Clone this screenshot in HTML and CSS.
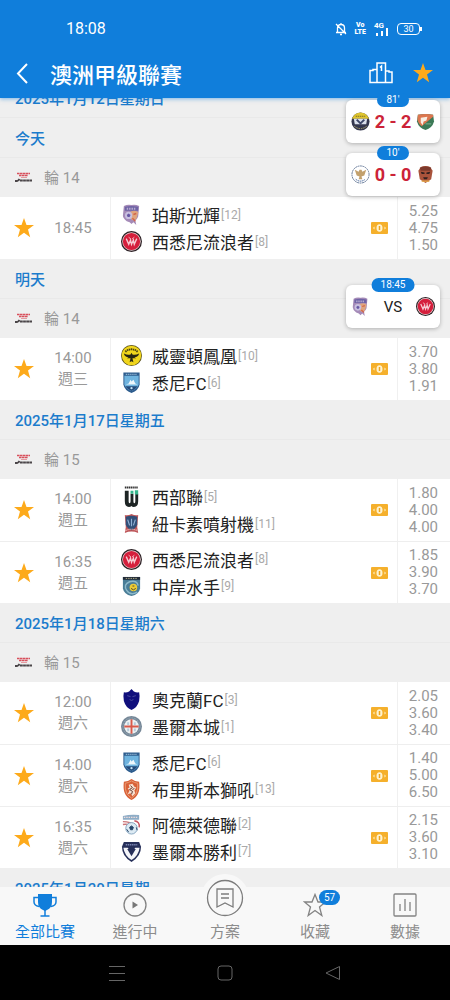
FILE: index.html
```html
<!DOCTYPE html>
<html lang="zh-Hant">
<head>
<meta charset="utf-8">
<meta name="viewport" content="width=device-width, initial-scale=1">
<title>澳洲甲級聯賽</title>
<link rel="stylesheet" href="styles.css">
</head>
<body>
<svg class="sprite" aria-hidden="true">
  <symbol id="star" viewBox="0 0 20 20"><path d="M10 0l2.500 7H20l-6 4.600 2.200 7.600L10 14.800l-6.200 4.400L6 11.600 0 7h7.500z"/></symbol>
  <symbol id="cash" viewBox="0 0 17 12"><rect width="17" height="12" rx="1" fill="#f5b02c"/><ellipse cx="8.500" cy="6" rx="3" ry="3.800" fill="#fff3d0"/><path d="M8.500 4v4" stroke="#eda51f" stroke-width="1.500"/><path d="M3.500 4.500L2 6l1.500 1.500zM13.500 4.500L15 6l-1.500 1.500z" fill="#fff3d0"/></symbol>
  <symbol id="league" viewBox="0 0 18 10"><path d="M2 1.500h13M4 3.500h9" stroke="#d8505c" stroke-width="1.500" stroke-dasharray="2.500 .4"/><path d="M6 5.500h6" stroke="#e39aa0" stroke-width="1"/><path d="M0 9h3l1.500-2M5 8.500h12" stroke="#4b4649" stroke-width="2" stroke-dasharray="2.800 .3" fill="none"/></symbol>
  <symbol id="perth" viewBox="0 0 22 22"><path d="M3 2q4-2 8-1 4-1 8 1l-1 11q-1 3-3 4l1 5-3-3-2 2-2-2-3-1q-4-3-4-6z" fill="#a58bb8"/><path d="M4 3q7-2 14 0v4H4z" fill="#6f63a5"/><path d="M6 5h10" stroke="#b9aed0" stroke-width="2" stroke-dasharray="1.500 1"/><path d="M10 8q6-2 8 1l-2 7-4 1-3-3z" fill="#e0a57c"/><circle cx="8" cy="12" r="3.800" fill="#c9c0e0"/><path d="M8 10l2 1.500-1 2H7l-1-2z" fill="#6656a3"/><path d="M13 11l3-1M12 15l3 3" stroke="#d2664c" stroke-width="1.500"/></symbol>
  <symbol id="wsw" viewBox="0 0 22 22"><circle cx="11" cy="11" r="11" fill="#2b2024"/><circle cx="11" cy="11" r="9.700" fill="#e8d3d6"/><circle cx="11" cy="11" r="9" fill="#d51f3c"/><path d="M5.500 8l2.600 6L10 9.500l1 4.500 2-4.500.9 4.500 2.600-6" fill="none" stroke="#f6ccd3" stroke-width="1.400"/><path d="M8 6.500l2.500 2M14 6.500l-2.500 2" stroke="#f4b9c2" stroke-width="1"/></symbol>
  <symbol id="phoenix" viewBox="0 0 22 22"><circle cx="11" cy="11" r="11" fill="#574f16"/><circle cx="11" cy="11" r="10.200" fill="#f0d51c"/><path d="M4.500 7q6.500-5 13 0" stroke="#4a4312" stroke-width="2" stroke-dasharray="1.500 .6" fill="none"/><path d="M3 9q4 2 7 1l1-2 1 2q3 1 7-1-1 4-5 4l2 1-4 0 1 4-2-1-2 1 1-4H6l2-1q-4 0-5-4z" fill="#282613"/></symbol>
  <symbol id="sydney" viewBox="0 0 22 22"><path d="M2.500 .5h17V13q-1 6-8.500 9Q3.500 19 2.500 13z" fill="#2d5c8d"/><path d="M3.500 4h15v9q-1 4-7.500 7-6.500-3-7.500-7z" fill="#6fb4df"/><path d="M5 2.500h12" stroke="#8fb2cf" stroke-width="1.300" stroke-dasharray="1.300 .7"/><path d="M5 13l3-1 2-4 1 2 2-2 2 4 2 1z" fill="#eef7fc"/><path d="M4.500 15h13q-2 3-6.500 5-4.500-2-6.500-5z" fill="#254a7a"/><circle cx="11" cy="17" r="1.200" fill="#c5e4f3"/></symbol>
  <symbol id="western" viewBox="0 0 22 22"><path d="M4 1.500h14" stroke="#333" stroke-width="2" stroke-dasharray="1.500 .5"/><path d="M4 5h4v11q0 2 1 2t1-2V8h3v8q0 2 1 2t1-2V8h3v8q0 6-4.500 6-2 0-2.500-1-1 1-2.700 1Q4 22 4 16z" fill="#1d2424"/><path d="M14.500 4.500H18V9h-3.500zM10 5h3v3h-3z" fill="#35b68d"/></symbol>
  <symbol id="jets" viewBox="0 0 22 22"><path d="M4 2q3 1 7-1 4 2 7 1l-1 13 1 6q-7-3-14 0l1-6z" fill="#bd5659"/><path d="M5 4q6-2 12 0v8q-1 4-6 6-5-2-6-6z" fill="#314f78"/><path d="M7 7l2 6M11 6v8M15 7l-2 6" stroke="#8fb0d4" stroke-width="1.200"/><path d="M4.500 18.500q6.500-3 13 0" stroke="#ecafad" stroke-width="1.200" fill="none" stroke-dasharray="1.500 .7"/></symbol>
  <symbol id="mariners" viewBox="0 0 22 22"><path d="M2 1h18v12q-1 6-9 8-8-2-9-8z" fill="#4a7d97"/><path d="M2 2.500h18" stroke="#222b38" stroke-width="3"/><path d="M5 2.500h12" stroke="#b9b48c" stroke-dasharray="1.500 1"/><path d="M17 17q-7 4-11-2t3-9q8-2 9 4" fill="none" stroke="#8db9ca" stroke-width="1.500"/><circle cx="13" cy="12" r="4" fill="#edcc35"/><path d="M10.500 13q2.500 3 5 0M12 10.500h2" stroke="#554b2a" fill="none"/></symbol>
  <symbol id="auckland" viewBox="0 0 22 22"><path d="M11 0l2.500 2.500Q16 4 19 3.500q1 4 0 9-2 7-8 9.500-6-2.500-8-9.500-1-5 0-9Q6 4 8.500 2.500z" fill="#100f7c"/><path d="M6.500 7l3.500 1M15.500 7L12 8M9 11l2 1 2-1" stroke="#4a4d9c" stroke-width="1" fill="none"/></symbol>
  <symbol id="city" viewBox="0 0 22 22"><circle cx="11" cy="11" r="11" fill="#758797"/><circle cx="11" cy="11" r="9" fill="none" stroke="#93a5b3" stroke-dasharray="2 1"/><circle cx="11" cy="11" r="7.600" fill="#edf1f2"/><path d="M11 3.500v15M3.500 11h15" stroke="#d95a4a" stroke-width="2"/><path d="M7.500 6.500v3M14.500 6.500v3M7.500 13v3M14.500 13v3" stroke="#b5cbda" stroke-width="2"/></symbol>
  <symbol id="roar" viewBox="0 0 22 22"><path d="M11 0q4 3 8 3 1 8-1 12-2 5-7 7-5-2-7-7-2-4-1-12 4 0 8-3z" fill="#d96138"/><path d="M11 2q3 2 6.500 2.500Q18 11 16 15q-2 3-5 5-3-2-5-5-2-4-1.500-10.500Q8 4 11 2z" fill="none" stroke="#e89c74"/><path d="M8 6l4-1 2 3 2 1-2 3 1 3-3 3-2-3-3 1 2-4-2-2 2-1z" fill="#f7dfcf"/><path d="M10 7l2 2-3 2 3 2-1 3M14 10l-2 1" stroke="#5a332c" fill="none"/></symbol>
  <symbol id="adelaide" viewBox="0 0 22 22"><path d="M2 2q8-2 17-1v5H2z" fill="#8eadc7"/><path d="M3 3.500h15" stroke="#f0dcdc" stroke-width="1.500" stroke-dasharray="1.500 1"/><path d="M2 8q8 0 13 4M2 11q7-1 12 3" stroke="#cb767a" stroke-width="1.500" fill="none"/><circle cx="11" cy="15" r="6" fill="#dceaf3" stroke="#83a4bf"/><path d="M11 12.500l2 1.500-1 2.500h-2L9 14zM6 16l2 3M16 14l1 3" fill="#28466a" stroke="#28466a"/><path d="M14 7q6 1 5 7" stroke="#c85661" fill="none" stroke-width="1.500"/></symbol>
  <symbol id="victory" viewBox="0 0 22 22"><path d="M3 1h16l2 5q0 10-10 16Q1 16 1 6z" fill="#27305a"/><path d="M2.500 7h4.600L11 13l3.900-6h4.600q-1 8-8.500 13Q3.500 15 2.500 7z" fill="#f5f6fa"/><path d="M6.500 8.500h9L11 16z" fill="#27305a"/><path d="M5 4h12" stroke="#7d87b3" stroke-width="1.500" stroke-dasharray="1.500 .7"/></symbol>
  <symbol id="badge-a" viewBox="0 0 20 20"><circle cx="10" cy="10" r="9.500" fill="#34374f"/><path d="M1 7Q4 .5 10 .5T19 7z" fill="#dfc52e"/><path d="M5 4.500h10" stroke="#7a6d2c" stroke-dasharray="1.500 .7"/><path d="M3 7h14l-1 6H4z" fill="#d9dfeb"/><path d="M6 8l4 4 4-4" fill="none" stroke="#3d4669" stroke-width="2"/><path d="M3.500 15q6.500 5 13 0" stroke="#b9b06a" fill="none" stroke-dasharray="1.500 1"/></symbol>
  <symbol id="badge-b" viewBox="0 0 20 20"><path d="M2 3q8-2 16 0l1 7q-2 7-9 9-7-2-9-9z" fill="#3b7956"/><path d="M2 3q8-2 16 0v2L6 15Q2 12 1.500 8z" fill="#dc764f"/><path d="M5 6l7-1-1 4-3 1-1 4-2-3z" fill="#f7efe4"/><path d="M10 12.500h6" stroke="#7fb596"/></symbol>
  <symbol id="badge-c" viewBox="0 0 20 20"><circle cx="10" cy="10" r="9" fill="#fff" stroke="#5f7394" stroke-dasharray="2 .6"/><path d="M4 5l4 2 1-2h2l1 2 4-2-2 6-3 1 1 3H8l1-3-3-1z" fill="#c3a16d"/><path d="M5 15q5 4 10 0" stroke="#3d5f96" fill="none" stroke-dasharray="1.500 .7"/></symbol>
  <symbol id="badge-d" viewBox="0 0 20 20"><path d="M5 2q5-2 10 0l2.500 4-1.500 9-6 4-6-4L2.500 6z" fill="#a9533b"/><path d="M4 3q6-3 12 0l-1 3H5z" fill="#7d3a2c"/><path d="M5 7l4 1v1.500H6zM15 7l-4 1v1.500h3zM7.500 13h5l-1 2h-3z" fill="#32201f"/><path d="M6 17h8" stroke="#e3a64c" stroke-width="1.500"/></symbol>
</svg>

<div class="app">
  <header class="top">
    <div class="status">
      <time>18:08</time>
      <div class="status-icons">
        <svg width="12" height="14" viewBox="0 0 12 14" fill="none" stroke="#fff" stroke-width="1.300"><path d="M2.500 10V6q0-3.500 3.500-3.500T9.500 6v4M1 10.500h10M6 1v1.500M5 12.500h2M1 2l10 10"/></svg>
        <span class="volte">Vo<br>LTE</span>
        <span class="signal"><span>4G</span><svg width="13" height="8" viewBox="0 0 13 8" fill="#fff"><path d="M0 5h2v3H0zM5 3h2v5H5zM10 0h2v8h-2z"/></svg></span>
        <span class="battery">30</span>
      </div>
    </div>
    <div class="title-bar">
      <button class="icon-button back" aria-label="返回"><svg width="12" height="21" viewBox="0 0 12 21" fill="none" stroke="#fff" stroke-width="2"><path d="M11 1L2 10.500 11 20"/></svg></button>
      <h1>澳洲甲級聯賽</h1>
      <button class="icon-button" aria-label="排名"><svg width="24" height="22" viewBox="0 0 24 22" fill="none" stroke="#fff" stroke-width="1.500"><path d="M8 20.500V1h8.500v19.500M8 7.500H4v1H1v12h22V10h-3V9h-3.500M11 5.500L12.500 4v5"/></svg></button>
      <button class="icon-button" aria-label="收藏聯賽"><svg class="star" width="20" height="20"><use href="#star"/></svg></button>
    </div>
  </header>

  <main class="list">
    <section class="past"><h2>2025年1月12日星期日</h2></section>

    <section>
      <h2>今天</h2>
      <div class="round"><svg width="18" height="10"><use href="#league"/></svg>輪 14</div>
      <article class="match">
        <button class="icon-button" aria-label="收藏"><svg class="star" width="20" height="20"><use href="#star"/></svg></button>
        <div class="when"><span>18:45</span></div>
        <div class="teams">
          <div class="team"><svg><use href="#perth"/></svg>珀斯光輝<small>[12]</small></div>
          <div class="team"><svg><use href="#wsw"/></svg>西悉尼流浪者<small>[8]</small></div>
        </div>
        <svg class="cash"><use href="#cash"/></svg>
        <div class="odds"><span>5.25</span><span>4.75</span><span>1.50</span></div>
      </article>
    </section>

    <section>
      <h2>明天</h2>
      <div class="round"><svg width="18" height="10"><use href="#league"/></svg>輪 14</div>
      <article class="match">
        <button class="icon-button" aria-label="收藏"><svg class="star" width="20" height="20"><use href="#star"/></svg></button>
        <div class="when"><span>14:00</span><span>週三</span></div>
        <div class="teams">
          <div class="team"><svg><use href="#phoenix"/></svg>威靈頓鳳凰<small>[10]</small></div>
          <div class="team"><svg><use href="#sydney"/></svg>悉尼FC<small>[6]</small></div>
        </div>
        <svg class="cash"><use href="#cash"/></svg>
        <div class="odds"><span>3.70</span><span>3.80</span><span>1.91</span></div>
      </article>
    </section>

    <section>
      <h2>2025年1月17日星期五</h2>
      <div class="round"><svg width="18" height="10"><use href="#league"/></svg>輪 15</div>
      <article class="match">
        <button class="icon-button" aria-label="收藏"><svg class="star" width="20" height="20"><use href="#star"/></svg></button>
        <div class="when"><span>14:00</span><span>週五</span></div>
        <div class="teams">
          <div class="team"><svg><use href="#western"/></svg>西部聯<small>[5]</small></div>
          <div class="team"><svg><use href="#jets"/></svg>紐卡素噴射機<small>[11]</small></div>
        </div>
        <svg class="cash"><use href="#cash"/></svg>
        <div class="odds"><span>1.80</span><span>4.00</span><span>4.00</span></div>
      </article>
      <article class="match">
        <button class="icon-button" aria-label="收藏"><svg class="star" width="20" height="20"><use href="#star"/></svg></button>
        <div class="when"><span>16:35</span><span>週五</span></div>
        <div class="teams">
          <div class="team"><svg><use href="#wsw"/></svg>西悉尼流浪者<small>[8]</small></div>
          <div class="team"><svg><use href="#mariners"/></svg>中岸水手<small>[9]</small></div>
        </div>
        <svg class="cash"><use href="#cash"/></svg>
        <div class="odds"><span>1.85</span><span>3.90</span><span>3.70</span></div>
      </article>
    </section>

    <section>
      <h2>2025年1月18日星期六</h2>
      <div class="round"><svg width="18" height="10"><use href="#league"/></svg>輪 15</div>
      <article class="match">
        <button class="icon-button" aria-label="收藏"><svg class="star" width="20" height="20"><use href="#star"/></svg></button>
        <div class="when"><span>12:00</span><span>週六</span></div>
        <div class="teams">
          <div class="team"><svg><use href="#auckland"/></svg>奧克蘭FC<small>[3]</small></div>
          <div class="team"><svg><use href="#city"/></svg>墨爾本城<small>[1]</small></div>
        </div>
        <svg class="cash"><use href="#cash"/></svg>
        <div class="odds"><span>2.05</span><span>3.60</span><span>3.40</span></div>
      </article>
      <article class="match">
        <button class="icon-button" aria-label="收藏"><svg class="star" width="20" height="20"><use href="#star"/></svg></button>
        <div class="when"><span>14:00</span><span>週六</span></div>
        <div class="teams">
          <div class="team"><svg><use href="#sydney"/></svg>悉尼FC<small>[6]</small></div>
          <div class="team"><svg><use href="#roar"/></svg>布里斯本獅吼<small>[13]</small></div>
        </div>
        <svg class="cash"><use href="#cash"/></svg>
        <div class="odds"><span>1.40</span><span>5.00</span><span>6.50</span></div>
      </article>
      <article class="match">
        <button class="icon-button" aria-label="收藏"><svg class="star" width="20" height="20"><use href="#star"/></svg></button>
        <div class="when"><span>16:35</span><span>週六</span></div>
        <div class="teams">
          <div class="team"><svg><use href="#adelaide"/></svg>阿德萊德聯<small>[2]</small></div>
          <div class="team"><svg><use href="#victory"/></svg>墨爾本勝利<small>[7]</small></div>
        </div>
        <svg class="cash"><use href="#cash"/></svg>
        <div class="odds"><span>2.15</span><span>3.60</span><span>3.10</span></div>
      </article>
    </section>

    <section><h2>2025年1月20日星期一</h2></section>
  </main>

  <aside class="floating">
    <div class="live"><span class="pill">81'</span><svg><use href="#badge-a"/></svg><b>2 - 2</b><svg><use href="#badge-b"/></svg></div>
    <div class="live"><span class="pill">10'</span><svg><use href="#badge-c"/></svg><b>0 - 0</b><svg><use href="#badge-d"/></svg></div>
    <div class="live upcoming"><span class="pill">18:45</span><svg><use href="#perth"/></svg><span>VS</span><svg><use href="#wsw"/></svg></div>
  </aside>

  <nav class="tabs">
    <a href="#all" class="tab active"><svg width="24" height="24" viewBox="0 0 24 24"><path d="M5 1h14v8q0 6-5 8-2 1-2 1t-2-1Q5 15 5 9z" fill="#107edb"/><path d="M5 4.500H1V9q0 3.500 5 4.500M19 4.500h4V9q0 3.500-5 4.500M12 16v7M7.500 23h9" fill="none" stroke="#107edb" stroke-width="1.500"/></svg>全部比賽</a>
    <a href="#live" class="tab"><svg width="24" height="24" viewBox="0 0 24 24"><circle cx="12" cy="12" r="11" fill="none" stroke="#838383" stroke-width="1.300"/><path d="M9.500 8.500L15 12l-5.500 3.500z" fill="#777"/></svg>進行中</a>
    <a href="#plans" class="tab"><svg class="raised" width="48" height="48" viewBox="0 0 48 48" fill="none" stroke="#7c7c7c" stroke-width="1.300"><circle cx="24" cy="24" r="17.500"/><path d="M16 15h16v18l-8-4-8 4zM20 20h8M20 24h8"/></svg>方案</a>
    <a href="#favourites" class="tab"><span class="with-count"><svg width="24" height="24" viewBox="0 0 24 24" fill="none" stroke="#838383" stroke-width="1.300"><path d="M12 1.500l3 7.500h7.500l-6 5 2.300 8.500L12 17.500l-6.800 5L7.500 14l-6-5H9z"/></svg><span class="count">57</span></span>收藏</a>
    <a href="#data" class="tab"><svg width="24" height="24" viewBox="0 0 24 24" fill="none" stroke="#838383" stroke-width="1.300"><rect x="1" y="1" width="22" height="22" rx="1"/><path d="M7 11v7M12 6v12M17 9v9"/></svg>數據</a>
  </nav>

  <footer class="system">
    <button class="icon-button" aria-label="最近使用"><svg width="16" height="16" viewBox="0 0 16 16"><path d="M0 1.500h16M0 8.500h16M0 15.500h16"/></svg></button>
    <button class="icon-button" aria-label="主畫面"><svg width="16" height="16" viewBox="0 0 16 16"><rect x="1" y="1" width="14" height="14" rx="3"/></svg></button>
    <button class="icon-button" aria-label="上一頁"><svg width="16" height="16" viewBox="0 0 16 16"><path d="M14.500 1.500v13L1 8z"/></svg></button>
  </footer>
</div>
</body>
</html>
```

FILE: styles.css
```css
* { box-sizing: border-box; }

body {
  margin: 0;
  background: #efefef;
  color: #222;
  font-family: Roboto, "Noto Sans CJK TC", sans-serif;
}

svg { display: block; flex: none; }
.sprite { position: absolute; width: 0; height: 0; }

.icon-button {
  display: grid;
  place-items: center;
  padding: 0;
  border: 0;
  background: none;
}

.star { fill: #fdaa1b; }

.app {
  position: relative;
  display: flex;
  flex-direction: column;
  height: 100vh;
}

/* Header */
.top {
  position: relative;
  z-index: 1;
  background: #107edb;
  color: #fff;
  box-shadow: 0 1px 4px #107edb80;
}

.status {
  display: flex;
  align-items: flex-end;
  justify-content: space-between;
  height: 48px;
  padding: 0 30px 10px 66px;
  font-size: 16px;
  line-height: 18px;
}

.status-icons {
  display: flex;
  align-items: center;
  gap: 8px;
  height: 18px;
}

.volte {
  font-size: 7px;
  line-height: 7px;
  font-weight: 900;
  text-align: center;
}

.signal {
  display: flex;
  align-items: flex-end;
  font-size: 8px;
  line-height: 8px;
  font-weight: 700;
}

.signal span { margin: 0 -8px 6px 0; }

.battery {
  position: relative;
  width: 23px;
  border: 1px solid #fff;
  border-radius: 4px;
  font-size: 9px;
  line-height: 10px;
  text-align: center;
}

.battery::after {
  content: "";
  position: absolute;
  top: 3px;
  right: -3px;
  width: 2px;
  height: 4px;
  background: #fff;
}

.title-bar {
  display: flex;
  align-items: center;
  gap: 20px;
  height: 50px;
  padding: 0 17px 0 16px;
}

h1 {
  flex: 1;
  margin: 0;
  padding-left: 2px;
  font-size: 22px;
  font-weight: 500;
}

/* Match list */
.list {
  flex: 1;
  min-height: 0;
  overflow: hidden;
}

.past { margin-top: -20px; }

h2 {
  height: 40px;
  margin: 0;
  padding: 1px 15px 0;
  border-bottom: 1px solid #e9e9e9;
  color: #1c7ccc;
  font-size: 15px;
  line-height: 40px;
  font-weight: 500;
}

.round {
  display: flex;
  align-items: center;
  gap: 11px;
  height: 39px;
  padding: 0 15px 2px;
  color: #999;
  font-size: 15px;
}

.match {
  display: grid;
  grid-template-columns: 48px 62px 1fr 36px 53px;
  height: 62px;
  background: #fff;
}

.match + .match { border-top: 1px solid #eee; }

.when {
  display: flex;
  flex-direction: column;
  justify-content: center;
  padding-right: 12px;
  color: #999;
  font-size: 15px;
  line-height: 21px;
  text-align: center;
}

.teams {
  display: flex;
  flex-direction: column;
  justify-content: center;
  padding-left: 10px;
  border-left: 1px solid #f0f0f0;
}

.team {
  display: flex;
  align-items: center;
  height: 27px;
  font-size: 17px;
  white-space: nowrap;
}

.team svg {
  width: 21px;
  height: 21px;
  margin-right: 10px;
}

.team small {
  margin-left: 1px;
  color: #aaa;
  font-size: 12px;
}

.cash {
  width: 17px;
  height: 12px;
  place-self: center;
}

.odds {
  display: flex;
  flex-direction: column;
  justify-content: center;
  padding-right: 12px;
  border-left: 1px solid #f0f0f0;
  color: #999;
  font-size: 15px;
  line-height: 17px;
  text-align: right;
}

/* Score cards lying over the list */
.floating {
  position: absolute;
  z-index: 2;
  top: 100px;
  right: 10px;
}

.live {
  position: relative;
  display: flex;
  align-items: center;
  justify-content: space-between;
  width: 94px;
  height: 43px;
  margin-bottom: 10px;
  padding: 0 5px;
  border-radius: 6px;
  background: #fff;
  box-shadow: 0 1px 4px #0004;
}

.live svg { width: 19px; height: 19px; }

.live b {
  color: #cc2338;
  font-size: 18px;
  font-weight: 700;
}

.upcoming {
  margin-top: 89px;
  font-size: 15px;
}

.pill {
  position: absolute;
  top: -7px;
  left: 50%;
  min-width: 32px;
  padding: 0 9px;
  border-radius: 7px;
  background: #107edb;
  color: #fff;
  font-size: 10px;
  line-height: 14px;
  text-align: center;
  transform: translateX(-50%);
}

/* Tabs */
.tabs {
  display: grid;
  grid-template-columns: repeat(5, 1fr);
  height: 58px;
  background: #f8f8f8;
}

.tab {
  display: flex;
  flex-direction: column;
  align-items: center;
  gap: 4px;
  padding-top: 6px;
  color: #8c8c8c;
  font-size: 15px;
  line-height: 22px;
  text-decoration: none;
}

.active { color: #107edb; }

.raised {
  margin: -19px 0 -5px;
  border-radius: 50%;
  background: #f8f8f8;
}

.with-count { position: relative; }

.count {
  position: absolute;
  top: -3px;
  left: 16px;
  width: 21px;
  border-radius: 8px;
  background: #107edb;
  color: #fff;
  font-size: 10px;
  line-height: 15px;
  text-align: center;
}

/* System navigation */
.system {
  display: flex;
  align-items: center;
  justify-content: center;
  gap: 92px;
  height: 55px;
  background: #000;
}

.system svg { fill: none; stroke: #666; }
```
